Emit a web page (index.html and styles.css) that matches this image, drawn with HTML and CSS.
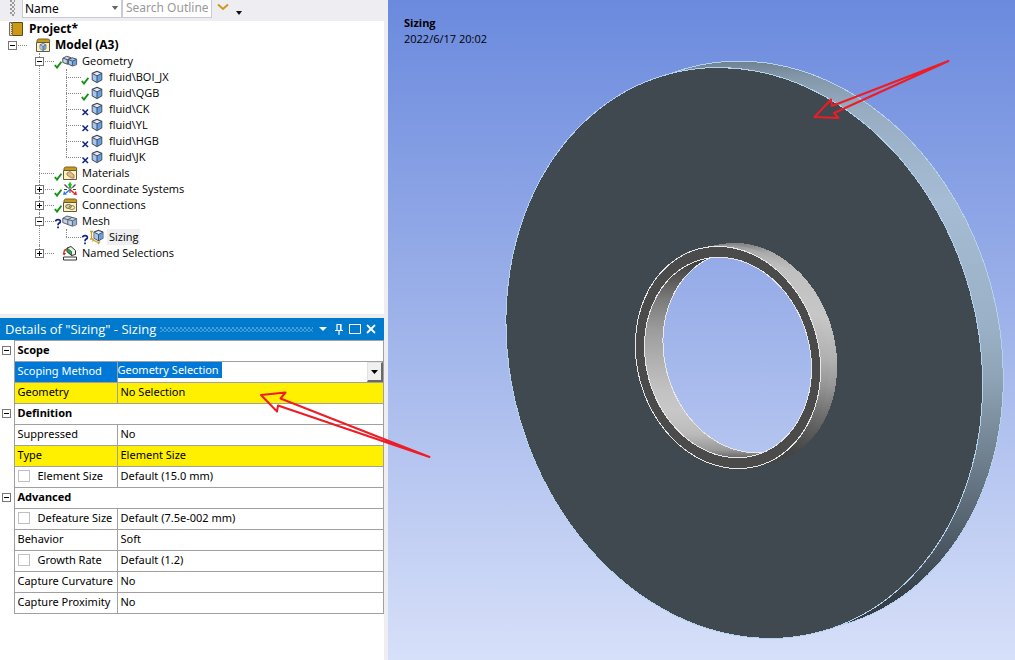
FILE: index.html
```html
<!DOCTYPE html>
<html lang="en">
<head>
<meta charset="utf-8">
<title>Sizing</title>
<link rel="stylesheet" href="styles.css">
</head>
<body>
<svg class="defs" aria-hidden="true">
  <symbol id="cube" viewBox="0 0 16 16">
    <path d="M8 2.3 12.7 4.4V10.8L8 13.6 3.3 10.8V4.4Z" fill="#dbe8f7" stroke="#444b55" stroke-width="1.2" stroke-linejoin="round"/>
    <path d="M8 7 12.3 4.9V10.6L8 13Z" fill="#62a0ee"/>
    <path d="M3.7 4.9 8 7V13L3.7 10.6Z" fill="#a5c6ee"/>
    <path d="M3.6 4.7 8 6.9 12.4 4.7M8 6.9V13.2" fill="none" stroke="#444b55"/>
  </symbol>
  <symbol id="parts" viewBox="0 0 16 16">
    <path d="M.8 5.2 4.600 3.3 9 4.6V10L5.4 11.2 .8 9.4Z" fill="#c4d9f1" stroke="#4c535c"/>
    <path d="M1.2 5.3 5.3 6.7 9 4.8M5.3 6.7V11" fill="none" stroke="#4c535c"/>
    <path d="M6.4 6.5 10.4 4.8 14.6 6.2V11.6L10.4 13 6.4 11.2Z" fill="#a5c6ee" stroke="#4c535c"/>
    <path d="M10.5 8.2 14.2 6.6V11.4L10.5 12.6Z" fill="#62a0ee"/>
    <path d="M6.6 6.7 10.4 8.1 14.4 6.4M10.4 8.1V12.8" fill="none" stroke="#4c535c"/>
  </symbol>
  <symbol id="mesh" viewBox="0 0 16 16">
    <path d="M.8 5.2 5 3 14.6 5.6V11.6L10.4 13.2 .8 9.6Z" fill="#c3d2e6" stroke="#59616b"/>
    <path d="M10.5 7.9 14.2 6.1V11.4L10.5 12.8Z" fill="#8fb3dd"/>
    <path d="M1 5.4 10.4 7.8 14.4 5.8M10.4 7.8V13M5.8 6.6V11.2M5.8 6.6 10 4.4" fill="none" stroke="#59616b"/>
  </symbol>
  <symbol id="folder" viewBox="0 0 16 16">
    <path d="M2 5V3.2L3.4 2H13.6L14.6 3V6H2Z" fill="#c69a1c" stroke="#77622b"/>
    <path d="M1.5 5.5H14.5V14.5H1.5Z" fill="#fdf3b4" stroke="#5d594e"/>
  </symbol>
  <symbol id="check" viewBox="0 0 8 16">
    <path d="M.8 12 3 14.6 7.4 8.8" fill="none" stroke="#129412" stroke-width="1.9"/>
  </symbol>
  <symbol id="cross" viewBox="0 0 8 16">
    <path d="M1.5 8.5 7 14M7 8.5 1.5 14" fill="none" stroke="#10207e" stroke-width="1.5"/>
  </symbol>
  <symbol id="query" viewBox="0 0 8 16">
    <path d="M1.5 8.4Q1.8 6.6 4 6.6 6.5 6.6 6.4 8.6 6.3 9.7 4.9 10.3 4 10.8 4 12.2M4 13.4V15.2" fill="none" stroke="#10207e" stroke-width="1.7"/>
  </symbol>
</svg>

<div class="app">
  <aside class="side">
    <div class="toolbar">
      <span class="grip"></span>
      <div class="pick">
        <select class="field" aria-label="Search by"><option>Name</option></select>
        <svg class="pick-arrow" viewBox="0 0 8 5" aria-hidden="true"><path d="M0 0H8L4 5Z" fill="#666"/></svg>
      </div>
      <input class="field search" type="text" placeholder="Search Outline" aria-label="Search Outline">
      <button class="tool" aria-label="Expand search"><svg width="12" height="8" viewBox="0 0 12 8"><path d="M1 1.5 6 6 11 1.5" fill="none" stroke="#c89b1f" stroke-width="2"/></svg></button>
      <button class="tool more" aria-label="More options"><svg width="6" height="4" viewBox="0 0 6 4"><path d="M0 0H6L3 4Z" fill="#111"/></svg></button>
    </div>

    <nav class="outline" aria-label="Outline">
      <div class="project">
        <svg class="icon" viewBox="0 0 16 16"><path d="M4.5 1.5H14.500V14.5H4.5Z" fill="#cb9a12" stroke="#5b4a1c"/><path d="M1.5 1.5H4.500V14.5H1.5Z" fill="#eee2bd" stroke="#776c50"/><path d="M3.5 2V14" stroke="#776c50" stroke-dasharray="1 1"/></svg>
        <span class="strong">Project*</span>
      </div>
      <ul class="tree root">
        <li>
          <div class="row"><button class="toggle" aria-label="Collapse Model"></button><span class="status"></span>
            <svg class="icon" viewBox="0 0 16 16"><use href="#folder"/><svg x="3" y="5" width="10" height="10"><use href="#cube"/></svg></svg><span class="name strong">Model (A3)</span></div>
          <ul class="tree">
            <li>
              <div class="row"><button class="toggle" aria-label="Collapse Geometry"></button><svg class="status"><use href="#check"/></svg><svg class="icon"><use href="#parts"/></svg><span class="name">Geometry</span></div>
              <ul class="tree">
                <li><div class="row"><svg class="status"><use href="#check"/></svg><svg class="icon"><use href="#cube"/></svg><span class="name">fluid\BOI_JX</span></div></li>
                <li><div class="row"><svg class="status"><use href="#check"/></svg><svg class="icon"><use href="#cube"/></svg><span class="name">fluid\QGB</span></div></li>
                <li><div class="row"><svg class="status"><use href="#cross"/></svg><svg class="icon"><use href="#cube"/></svg><span class="name">fluid\CK</span></div></li>
                <li><div class="row"><svg class="status"><use href="#cross"/></svg><svg class="icon"><use href="#cube"/></svg><span class="name">fluid\YL</span></div></li>
                <li><div class="row"><svg class="status"><use href="#cross"/></svg><svg class="icon"><use href="#cube"/></svg><span class="name">fluid\HGB</span></div></li>
                <li><div class="row"><svg class="status"><use href="#cross"/></svg><svg class="icon"><use href="#cube"/></svg><span class="name">fluid\JK</span></div></li>
              </ul>
            </li>
            <li><div class="row"><svg class="status"><use href="#check"/></svg><svg class="icon" viewBox="0 0 16 16"><use href="#folder"/><path d="M5 8 8 6.500 12 10V13L9.500 13 5 10Z" fill="#e6b98c" stroke="#8d7257" stroke-width=".8"/></svg><span class="name">Materials</span></div></li>
            <li><div class="row"><button class="toggle plus" aria-label="Expand Coordinate Systems"></button><svg class="status"><use href="#check"/></svg><svg class="icon" viewBox="0 0 16 16"><path d="M2.500 3.500 5.500 6.500M13.500 3.500 10.500 6.500M2 8.500H5M11 8.500H14" stroke="#444" stroke-width="1.200"/><path d="M8 .8 10.300 4.500H9V7H7V4.500H5.700Z" fill="#13c313"/><path d="M8 8.500V12M8 8.500 5.500 6M8 8.500 10.500 6" stroke="#444"/><path d="M8 8.500 4 12" stroke="#2677e8" stroke-width="1.500"/><path d="M1 14 2 10 5 13.500Z" fill="#2677e8"/><path d="M8 8.500 12 12" stroke="#e21e1e" stroke-width="1.500"/><path d="M15 14 14 10 11 13.500Z" fill="#e21e1e"/></svg><span class="name">Coordinate Systems</span></div></li>
            <li><div class="row"><button class="toggle plus" aria-label="Expand Connections"></button><svg class="status"><use href="#check"/></svg><svg class="icon" viewBox="0 0 16 16"><use href="#folder"/><ellipse cx="6.500" cy="9.500" rx="2.800" ry="2" fill="#d9d3a8" stroke="#6d6a60"/><ellipse cx="9.800" cy="10.500" rx="2.800" ry="2" fill="none" stroke="#8d7b45"/></svg><span class="name">Connections</span></div></li>
            <li>
              <div class="row"><button class="toggle" aria-label="Collapse Mesh"></button><svg class="status"><use href="#query"/></svg><svg class="icon"><use href="#mesh"/></svg><span class="name">Mesh</span></div>
              <ul class="tree">
                <li><div class="row"><svg class="status"><use href="#query"/></svg><svg class="icon" viewBox="0 0 16 16"><path d="M1 2.500H4M2.500 2.500V10M1 10H4M4 11 10 14M3.500 12.500 5 10M9 15 11 12.500" stroke="#cda12d" stroke-width="1.300" fill="none"/><svg x="2" y="-1" width="15" height="15"><use href="#cube"/></svg></svg><span class="name current">Sizing</span></div></li>
              </ul>
            </li>
            <li><div class="row"><button class="toggle plus" aria-label="Expand Named Selections"></button><span class="status"></span><svg class="icon" viewBox="0 0 16 16"><path d="M5 3 9 1.500 13.500 5.500V9.500L9.500 10.500 5 6.500Z" fill="#e9f3e9" stroke="#333"/><path d="M5 3 9.500 6.500V10.500L5 6.500Z" fill="#22b43b" stroke="#333" stroke-width=".7"/><path d="M4 4.500Q1.500 5 2 9.500" fill="none" stroke="#dd2020" stroke-width="1.300"/><path d="M.5 8H4L2.200 10.500Z" fill="#dd2020"/><path d="M1.500 12H14.500V15H1.500Z" fill="#fff" stroke="#333"/></svg><span class="name">Named Selections</span></div></li>
          </ul>
        </li>
      </ul>
    </nav>

    <section class="details">
      <header class="titlebar">
        <h2>Details of "Sizing" - Sizing</h2>
        <span class="dots"></span>
        <button class="win" aria-label="Menu"><svg viewBox="0 0 12 12"><path d="M2 4H10L6 8Z" fill="#fff"/></svg></button>
        <button class="win" aria-label="Pin"><svg viewBox="0 0 12 12"><path d="M4 7V1.500H8V7M2 7.500H10M6 8V12M7.500 1V7" fill="none" stroke="#fff" stroke-width="1.200"/></svg></button>
        <button class="win" aria-label="Maximize"><svg viewBox="0 0 12 12"><path d="M.5 1.500H11.500V10.500H.5Z" fill="none" stroke="#fff"/><path d="M0 1.500H12" stroke="#fff"/></svg></button>
        <button class="win" aria-label="Close"><svg viewBox="0 0 12 12"><path d="M2 2 10 10M10 2 2 10" stroke="#fff" stroke-width="1.800"/></svg></button>
      </header>
      <table class="props">
        <colgroup><col class="c-gutter"><col class="c-label"><col></colgroup>
        <tr><td class="gutter"><button class="toggle" aria-label="Collapse Scope"></button></td><th colspan="2">Scope</th></tr>
        <tr><td class="gutter"></td><td class="active"><label for="method">Scoping Method</label></td>
          <td class="edit"><div class="combo"><select id="method"><option>Geometry Selection</option></select><span class="drop" aria-hidden="true"><svg width="7" height="4" viewBox="0 0 7 4"><path d="M0 0H7L3.500 4Z" fill="#000"/></svg></span></div></td></tr>
        <tr class="missing"><td class="gutter"></td><td>Geometry</td><td>No Selection</td></tr>
        <tr><td class="gutter"><button class="toggle" aria-label="Collapse Definition"></button></td><th colspan="2">Definition</th></tr>
        <tr><td class="gutter"></td><td>Suppressed</td><td>No</td></tr>
        <tr class="missing"><td class="gutter"></td><td>Type</td><td>Element Size</td></tr>
        <tr><td class="gutter"></td><td><label class="opt"><input type="checkbox">Element Size</label></td><td>Default (15.0 mm)</td></tr>
        <tr><td class="gutter"><button class="toggle" aria-label="Collapse Advanced"></button></td><th colspan="2">Advanced</th></tr>
        <tr><td class="gutter"></td><td><label class="opt"><input type="checkbox">Defeature Size</label></td><td>Default (7.5e-002 mm)</td></tr>
        <tr><td class="gutter"></td><td>Behavior</td><td>Soft</td></tr>
        <tr><td class="gutter"></td><td><label class="opt"><input type="checkbox">Growth Rate</label></td><td>Default (1.2)</td></tr>
        <tr><td class="gutter"></td><td>Capture Curvature</td><td>No</td></tr>
        <tr><td class="gutter"></td><td>Capture Proximity</td><td>No</td></tr>
      </table>
    </section>
  </aside>

  <main class="scene">
    <svg class="model" viewBox="388 0 627 660" preserveAspectRatio="xMidYMid slice" role="img" aria-label="Disc model">
      <defs>
        <linearGradient id="sky" gradientUnits="userSpaceOnUse" x1="0" y1="0" x2="0" y2="660"><stop offset="0" stop-color="#6b8ade"/><stop offset=".5" stop-color="#a0b4ea"/><stop offset="1" stop-color="#d7e0f9"/></linearGradient>
        <linearGradient id="rim" gradientUnits="userSpaceOnUse" x1="765" y1="60" x2="765" y2="620" gradientTransform="rotate(15.500 765 346.500)"><stop offset="0" stop-color="#6e808f"/><stop offset=".03" stop-color="#8397aa"/><stop offset=".09" stop-color="#98adc2"/><stop offset=".25" stop-color="#a5bcd4"/><stop offset=".48" stop-color="#9ab0c6"/><stop offset=".57" stop-color="#8ea3b6"/><stop offset=".66" stop-color="#7a8c9c"/><stop offset=".79" stop-color="#5f6d7b"/><stop offset=".89" stop-color="#47525d"/><stop offset=".96" stop-color="#353e46"/></linearGradient>
        <linearGradient id="hub" gradientUnits="userSpaceOnUse" x1="740" y1="243" x2="740" y2="463" gradientTransform="rotate(15.500 740 355)"><stop offset="0" stop-color="#868686"/><stop offset=".04" stop-color="#aaa"/><stop offset=".12" stop-color="#c0c0c0"/><stop offset=".33" stop-color="#c7c7c7"/><stop offset=".53" stop-color="#b0b0b0"/><stop offset=".65" stop-color="#969696"/><stop offset=".76" stop-color="#747474"/><stop offset=".85" stop-color="#5c5c5c"/><stop offset=".95" stop-color="#444"/></linearGradient>
        <linearGradient id="bore" gradientUnits="userSpaceOnUse" x1="728" y1="258" x2="728" y2="458" gradientTransform="rotate(15.500 728 357.500)"><stop offset=".02" stop-color="#404040"/><stop offset=".11" stop-color="#5a5a5a"/><stop offset=".21" stop-color="#7c7c7c"/><stop offset=".36" stop-color="#9c9c9c"/><stop offset=".51" stop-color="#b0b0b0"/><stop offset=".66" stop-color="#c2c2c2"/><stop offset=".76" stop-color="#c8c8c8"/><stop offset=".88" stop-color="#bbb"/><stop offset=".96" stop-color="#999"/><stop offset="1" stop-color="#666"/></linearGradient>
        <clipPath id="opening"><ellipse cx="728" cy="357.500" rx="82" ry="101.500" transform="rotate(-15.500 728 357.500)"/></clipPath>
        <clipPath id="exit"><ellipse cx="746.500" cy="352.500" rx="82" ry="101.500" transform="rotate(-15.500 746.500 352.500)"/></clipPath>
      </defs>
      <rect x="388" width="627" height="660" fill="url(#sky)"/>
      <g shape-rendering="crispEdges">
        <ellipse cx="765" cy="346.500" rx="234" ry="289" transform="rotate(-15.500 765 346.500)" fill="url(#rim)" stroke="#b5d2ec"/>
        <ellipse cx="744.300" cy="353" rx="234" ry="289" transform="rotate(-15.500 744.300 353)" fill="#404850" stroke="#b5d2ec"/>
        <ellipse cx="744.500" cy="354" rx="91" ry="112.500" transform="rotate(-15.500 744.500 354)" fill="url(#hub)"/>
        <ellipse cx="736" cy="355.600" rx="91" ry="112.500" transform="rotate(-15.500 736 355.600)" fill="url(#hub)"/>
        <ellipse cx="728" cy="357.500" rx="91" ry="112.500" transform="rotate(-15.500 728 357.500)" fill="#4b4b4b" stroke="#e8e8e8"/>
        <ellipse cx="728" cy="357.500" rx="82" ry="101.500" transform="rotate(-15.500 728 357.500)" fill="url(#bore)"/>
        <g clip-path="url(#opening)">
          <rect x="640" y="240" width="200" height="230" fill="url(#sky)" clip-path="url(#exit)"/>
          <ellipse cx="746.500" cy="352.500" rx="82" ry="101.500" transform="rotate(-15.500 746.500 352.500)" fill="none" stroke="#e8e8e8"/>
        </g>
        <ellipse cx="728" cy="357.500" rx="82" ry="101.500" transform="rotate(-15.500 728 357.500)" fill="none" stroke="#e8e8e8"/>
      </g>
    </svg>
    <div class="caption"><strong>Sizing</strong><span>2022/6/17 20:02</span></div>
  </main>

  <svg class="marks" viewBox="0 0 1015 660" aria-hidden="true">
    <path d="M261 395 285.500 392.500 280.500 398.500 429.500 457 278 405.500 277 411.500Z"/>
    <path d="M814.500 117 831 99.500 832 106 948.500 61 834 113 838.500 118Z"/>
  </svg>
</div>
</body>
</html>
```

FILE: styles.css
```css
* { box-sizing: border-box; }

body {
  margin: 0;
  font-family: "Noto Sans", "Open Sans", sans-serif;
  font-size: 11px;
  color: #000;
}

button, input, select { font: inherit; color: inherit; }

button {
  padding: 0;
  border: 0;
  background: none;
}

.defs { position: absolute; width: 0; height: 0; }

.app {
  position: relative;
  display: grid;
  grid-template-columns: minmax(0, 388fr) minmax(0, 627fr);
  min-height: 100vh;
}

.side {
  display: flex;
  flex-direction: column;
  gap: 4px;
  padding-right: 4px;
  background: #eeeef2;
}

/* Toolbar */
.toolbar {
  display: flex;
  align-items: flex-start;
  height: 21px;
  margin-bottom: -4px;
  padding-left: 10px;
  font-size: 12px;
}

.grip {
  width: 5px;
  height: 16px;
  margin-right: 7px;
  background:
    radial-gradient(circle at 1px 1px, #999 1px, transparent 1px) 0 0 / 4px 4px,
    radial-gradient(circle at 1px 1px, #999 1px, transparent 1px) 2px 2px / 4px 4px;
}

.pick { position: relative; width: 100px; }

.field {
  display: block;
  height: 18px;
  padding: 0 3px 2px;
  border: 1px solid #c8cad4;
  border-top: 0;
  border-radius: 0;
  background: #fff;
  appearance: none;
  outline: 0;
}

.pick .field { width: 100%; padding-left: 2px; }
.search { width: 90px; }
.search::placeholder { color: #999; opacity: 1; }

.pick-arrow {
  position: absolute;
  top: 6px;
  right: 3px;
  width: 8px;
  height: 4px;
  pointer-events: none;
}

.tool { display: flex; padding: 3px 0 0 5px; }
.more { padding: 11px 0 0 7px; }

/* Outline tree */
.outline {
  flex: 1;
  background: #fff;
  font-family: "Open Sans", "Noto Sans", sans-serif;
  line-height: 16px;
}

.project {
  display: flex;
  gap: 5px;
  padding-left: 8px;
}

.strong { font-size: 12px; font-weight: 700; }

.tree {
  margin: 0;
  padding: 0 0 0 27px;
  list-style: none;
}

.tree.root { padding-left: 8px; }

.tree li { position: relative; }

.tree li::before {
  content: "";
  position: absolute;
  top: 0;
  bottom: 0;
  left: 4px;
  border-left: 1px dotted #888;
}

.tree li:last-child::before { bottom: auto; height: 8px; }
.tree.root > li::before { display: none; }

.row {
  position: relative;
  display: flex;
  align-items: center;
  height: 16px;
}

.row::before {
  content: "";
  width: 15px;
  margin-left: 4px;
  border-top: 1px dotted #888;
}

.row .toggle { position: absolute; left: 0; top: 4px; }

.toggle {
  display: block;
  width: 9px;
  height: 9px;
  border: 1px solid #777;
  background: linear-gradient(#000, #000) center / 5px 1px no-repeat #fff;
}

.toggle.plus {
  background: linear-gradient(#000, #000) center / 5px 1px no-repeat,
    linear-gradient(#000, #000) center / 1px 5px no-repeat, #fff;
}

.status { width: 8px; height: 16px; overflow: visible; }
.icon { width: 16px; height: 16px; flex: none; }

.name { margin-left: 2px; padding: 0 2px; white-space: nowrap; }
.current { background: #efefef; }

/* Details panel */
.details { min-height: 342px; background: #fff; }

.titlebar {
  display: flex;
  align-items: center;
  gap: 4px;
  height: 22px;
  padding: 0 7px 0 5px;
  background: #007acc;
  color: #fff;
}

.titlebar h2 {
  margin: 0;
  font-family: "Open Sans", "Noto Sans", sans-serif;
  font-size: 13px;
  font-weight: 400;
  line-height: 20px;
  white-space: nowrap;
}

.dots {
  flex: 1;
  height: 5px;
  background:
    radial-gradient(circle at 1px 1px, #4a9fd9 1px, transparent 1px) 0 0 / 4px 4px,
    radial-gradient(circle at 1px 1px, #4a9fd9 1px, transparent 1px) 2px 2px / 4px 4px;
}

.win { display: flex; width: 12px; height: 12px; }
.win svg { width: 12px; height: 12px; }

.props {
  width: 100%;
  border-collapse: collapse;
  table-layout: fixed;
}

.c-gutter { width: 14px; }
.c-label { width: 103px; }

.props td, .props th {
  height: 21px;
  padding: 0 0 2px 3px;
  border: 1px solid #a0a0a0;
  line-height: 16px;
  text-align: left;
  white-space: nowrap;
}

.props .gutter { padding: 0 2px 2px; border-width: 0 1px 0 0; }
.missing td:not(.gutter) { background: #fff000; }
.props .active { background: #0078d7; color: #fff; }
.props .edit { padding: 0; }

.opt { display: flex; align-items: center; gap: 8px; }

.opt input {
  appearance: none;
  width: 12px;
  height: 12px;
  margin: 0;
  border: 1px solid #c0c0c0;
  background: #fff;
}

.combo { position: relative; height: 20px; }

.combo select {
  width: 100%;
  height: 16px;
  padding: 0;
  border: 0;
  display: block;
  background: linear-gradient(#0078d7, #0078d7) 0 0 / 104px 16px no-repeat #fff;
  color: #fff;
  appearance: none;
}

.drop {
  position: absolute;
  top: 0;
  right: 0;
  display: grid;
  place-items: center;
  width: 16px;
  height: 20px;
  border: 1px solid #e3e3e3;
  border-right: 2px solid #696969;
  border-bottom: 2px solid #696969;
  background: #f0f0f0;
  pointer-events: none;
}

/* 3D view */
.scene { position: relative; background: #a0b4ea; }

.model { display: block; width: 100%; height: 100%; }

.caption {
  position: absolute;
  top: 15px;
  left: 16px;
  display: grid;
  font-family: "Open Sans", "Noto Sans", sans-serif;
  line-height: 16px;
}

.marks {
  position: absolute;
  inset: 0;
  width: 100%;
  pointer-events: none;
}

.marks path {
  fill: none;
  stroke: #ee1c24;
  stroke-width: 2;
  stroke-linejoin: round;
}
```
